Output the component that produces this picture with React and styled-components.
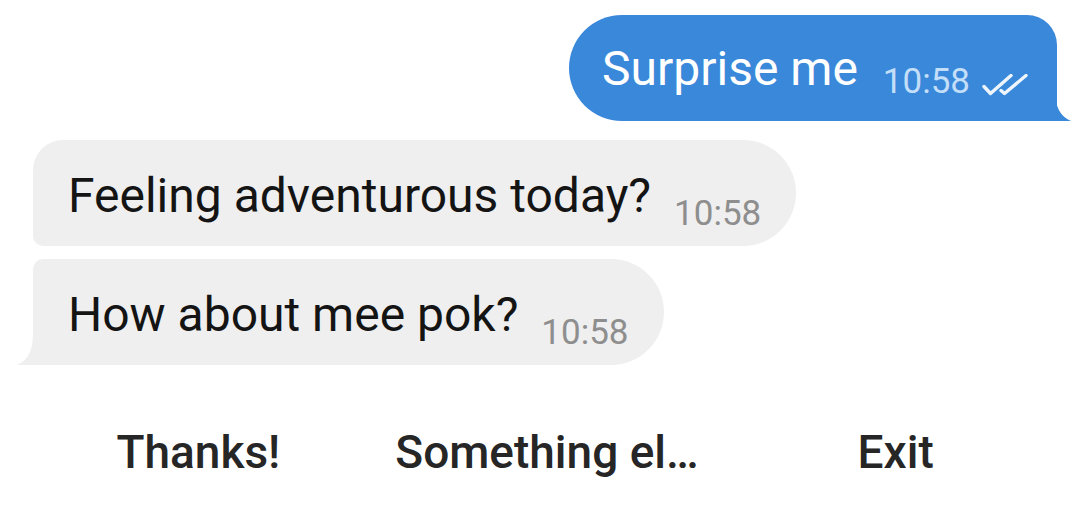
import React from "react";
import styled, { createGlobalStyle } from "styled-components";

const GlobalStyle = createGlobalStyle`
  html, body {
    margin: 0;
    padding: 0;
    background: #ffffff;
  }
  body {
    font-family: Roboto, "Liberation Sans", sans-serif;
  }
`;

function DoubleCheck() {
  return (
    <Checks viewBox="0 0 50 22">
      <path d="M3 12.5 L9.5 19.5 L30 1.5" />
      <path d="M20 16.5 L23.5 19.5 L45 1.5" />
    </Checks>
  );
}

function Tail({ side, color }) {
  // little hook at the bottom corner of a bubble
  return (
    <TailShape side={side} viewBox="0 0 16 32" width="16" height="32">
      <path d="M0 0 C0 18 5 27 16 32 L0 32 Z" fill={color} />
    </TailShape>
  );
}

function Message({ mine, text, time, tail, corners }) {
  return (
    <Row mine={mine}>
      <Bubble mine={mine} corners={corners}>
        <Text mine={mine}>{text}</Text>
        <Meta mine={mine}>
          <Time mine={mine}>{time}</Time>
          {mine && <DoubleCheck />}
        </Meta>
        {tail && <Tail side={mine ? "right" : "left"} color={mine ? "#3a88da" : "#efefef"} />}
      </Bubble>
    </Row>
  );
}

export default function App() {
  return (
    <>
      <GlobalStyle />
      <Screen>
        <Thread>
          <Message mine text="Surprise me" time="10:58" tail corners="53px 30px 0 53px" />
          <Incoming>
            <Message text="Feeling adventurous today?" time="10:58" corners="30px 53px 53px 10px" />
            <Message text="How about mee pok?" time="10:58" tail corners="10px 53px 53px 0" />
          </Incoming>
        </Thread>
        <Replies>
          <Reply>
            <ReplyLabel>Thanks!</ReplyLabel>
          </Reply>
          <Reply>
            <ReplyLabel>Something el…</ReplyLabel>
          </Reply>
          <Reply>
            <ReplyLabel>Exit</ReplyLabel>
          </Reply>
        </Replies>
      </Screen>
    </>
  );
}

const Screen = styled.div`
  width: 1080px;
  height: 524px;
  display: flex;
  flex-direction: column;
  background: #ffffff;
  overflow: hidden;
`;

const Thread = styled.div`
  display: flex;
  flex-direction: column;
  gap: 19px;
  padding: 15px 23px 0 33px;
`;

const Incoming = styled.div`
  display: flex;
  flex-direction: column;
  gap: 13px;
`;

const Row = styled.div`
  display: flex;
  justify-content: ${(p) => (p.mine ? "flex-end" : "flex-start")};
`;

const Bubble = styled.div`
  position: relative;
  display: flex;
  align-items: baseline;
  height: 106px;
  box-sizing: border-box;
  padding: ${(p) => (p.mine ? "0 26px 0 33px" : "0 35px 0 35px")};
  border-radius: ${(p) => p.corners};
  background: ${(p) => (p.mine ? "#3a88da" : "#efefef")};
`;

const Text = styled.span`
  font-size: 48px;
  line-height: 1;
  padding-top: ${(p) => (p.mine ? "30px" : "32px")};
  color: ${(p) => (p.mine ? "#ffffff" : "#141414")};
`;

const Meta = styled.span`
  display: flex;
  align-items: flex-end;
  gap: 11px;
  margin-left: ${(p) => (p.mine ? "25px" : "23px")};
  position: relative;
  top: ${(p) => (p.mine ? "8px" : "13px")};
`;

const Time = styled.span`
  font-size: 35px;
  line-height: 1;
  color: ${(p) => (p.mine ? "#c3def8" : "#8e8e8e")};
`;

const Checks = styled.svg`
  display: block;
  flex: 0 0 50px;
  width: 50px;
  height: 22px;
  fill: none;
  stroke: #eef5fd;
  stroke-width: 3.4;
  stroke-linecap: round;
  stroke-linejoin: round;
  margin-bottom: 3px;
`;

const TailShape = styled.svg`
  position: absolute;
  bottom: 0;
  ${(p) => (p.side === "right" ? "right: -14px;" : "left: -16px; transform: scaleX(-1);")}
`;

const Replies = styled.div`
  display: grid;
  grid-template-columns: repeat(3, 1fr);
  margin-top: 52px;
  padding: 0 10px 0 24px;
`;

const Reply = styled.div`
  display: flex;
  justify-content: center;
  align-items: center;
  height: 70px;
`;

const ReplyLabel = styled.span`
  font-size: 46px;
  font-weight: 500;
  color: #262626;
`;
